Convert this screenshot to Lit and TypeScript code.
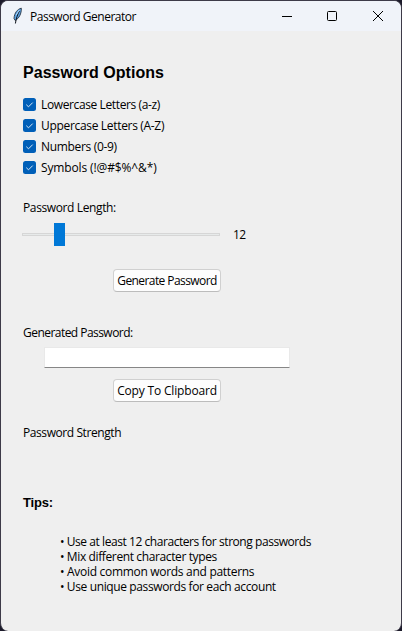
import { LitElement, html, css } from "lit";
import { customElement, state } from "lit/decorators.js";

interface Line {
  label: string;
  tracking: number;
}

const OPTIONS: Line[] = [
  { label: "Lowercase Letters (a-z)", tracking: -0.38 },
  { label: "Uppercase Letters (A-Z)", tracking: -0.32 },
  { label: "Numbers (0-9)", tracking: -0.33 },
  { label: "Symbols (!@#$%^&*)", tracking: -0.13 },
];

const TIPS: Line[] = [
  { label: "• Use at least 12 characters for strong passwords", tracking: -0.44 },
  { label: "• Mix different character types", tracking: -0.38 },
  { label: "• Avoid common words and patterns", tracking: -0.3 },
  { label: "• Use unique passwords for each account", tracking: -0.38 },
];

@customElement("app-root")
export class AppRoot extends LitElement {
  @state() private length = 12;

  static styles = css`
    :host {
      display: block;
      height: 631px;
      background: #1c1a2a;
      color: #000;
      font: 12px/15px "Open Sans", "Noto Sans", sans-serif;
      white-space: nowrap;
    }
    * { box-sizing: border-box; }
    .window {
      height: 631px;
      border: 1px solid #3d3a48;
      border-bottom: 0;
      border-radius: 8px;
      background: #efefef;
      overflow: hidden;
    }
    .titlebar {
      display: flex;
      align-items: center;
      height: 30px;
      background: #f0f3f9;
      padding-left: 9px;
    }
    .feather { width: 14px; height: 18px; margin-right: 6px; flex: none; }
    .title { flex: 1; letter-spacing: -0.49px; }
    .control {
      width: 46px;
      height: 30px;
      display: flex;
      align-items: center;
      justify-content: center;
    }
    .minimize { width: 44px; }
    .control svg { width: 12px; height: 12px; }
    .content {
      display: flex;
      flex-direction: column;
      align-items: flex-start;
      padding: 32px 0 0 22px;
    }
    h1 {
      margin: 0;
      font: bold 16px/20px "Liberation Sans", Arial, sans-serif;
      letter-spacing: 0.03px;
    }
    .options { margin-top: 11px; }
    .option { display: flex; align-items: center; height: 21px; }
    .check { width: 13px; height: 13px; margin-right: 5px; flex: none; }
    .length-label { margin-top: 22px; letter-spacing: -0.38px; }
    .slider { display: flex; align-items: center; height: 23px; margin-top: 8px; }
    .track {
      position: relative;
      width: 198px;
      height: 3px;
      margin-left: -1px;
      border: 1px solid #d6d6d6;
      background: #e7eaea;
    }
    .thumb {
      position: absolute;
      top: -11px;
      width: 11px;
      height: 23px;
      background: #0078d7;
    }
    .value { margin-left: 13px; letter-spacing: -0.7px; }
    .button {
      display: flex;
      align-items: center;
      justify-content: center;
      width: 108px;
      height: 23px;
      margin-left: 90px;
      padding: 0;
      border: 1px solid #d0d0d0;
      border-bottom-color: #bcbcbc;
      border-radius: 4px;
      background: #fdfdfd;
      font: inherit;
      color: inherit;
    }
    .generate { margin-top: 23px; letter-spacing: -0.58px; }
    .output-label { margin-top: 33px; letter-spacing: -0.54px; }
    .output {
      width: 246px;
      height: 21px;
      margin: 7px 0 0 21px;
      border: 1px solid #e9e9e9;
      border-bottom-color: #868686;
      border-radius: 1px;
      background: #fff;
      padding: 0 4px;
      outline: none;
    }
    .copy { margin-top: 11px; letter-spacing: -0.17px; }
    .strength { margin-top: 23px; letter-spacing: -0.42px; }
    h2 {
      margin: 55px 0 0;
      font: bold 13px/16px "Liberation Sans", Arial, sans-serif;
      letter-spacing: -0.2px;
    }
    .tips { margin: 23px 0 0 37px; padding: 0; list-style: none; }
  `;

  render() {
    return html`
      <div class="window">
        <header class="titlebar">
          <svg class="feather" viewBox="0 0 14 18">
            <path d="M11.3 1.2 C7.5 2 4.3 6 4 11.5 L5.2 13.5 C9 11.5 11.6 6.5 11.3 1.2Z" fill="#5ba3e6" stroke="#26313e" stroke-width=".9" />
            <path d="M9.4 4 C7.4 8 6.2 11 5.4 16.5" fill="none" stroke="#10151d" />
            <path d="M9.3 3 L6.2 8" stroke="#b9dcfa" stroke-width=".9" />
          </svg>
          <span class="title">Password Generator</span>
          <span class="control minimize">
            <svg viewBox="0 0 12 12"><path d="M1 6.5H11" stroke="#000" /></svg>
          </span>
          <span class="control">
            <svg viewBox="0 0 12 12"><rect x="1.5" y="1.5" width="9" height="9" rx="1" fill="none" stroke="#000" /></svg>
          </span>
          <span class="control">
            <svg viewBox="0 0 12 12"><path d="M1 1L11 11M11 1L1 11" stroke="#000" /></svg>
          </span>
        </header>
        <main class="content">
          <h1>Password Options</h1>
          <div class="options">
            ${OPTIONS.map(
              (o) => html`<div class="option">
                <svg class="check" viewBox="0 0 13 13">
                  <rect width="13" height="13" rx="2.5" fill="#005fb8" />
                  <path d="M3.3 6.7L5.5 8.8L9.7 4.6" fill="none" stroke="#d5e6f5" />
                </svg>
                <span style="letter-spacing:${o.tracking}px">${o.label}</span>
              </div>`
            )}
          </div>
          <div class="length-label">Password Length:</div>
          <div class="slider">
            <div class="track">
              <div class="thumb" style="left:${31 + (this.length - 12) * 7.8}px"></div>
            </div>
            <span class="value">${this.length}</span>
          </div>
          <button class="button generate">Generate Password</button>
          <div class="output-label">Generated Password:</div>
          <input class="output" readonly />
          <button class="button copy">Copy To Clipboard</button>
          <div class="strength">Password Strength</div>
          <h2>Tips:</h2>
          <ul class="tips">
            ${TIPS.map((t) => html`<li style="letter-spacing:${t.tracking}px">${t.label}</li>`)}
          </ul>
        </main>
      </div>
    `;
  }
}
